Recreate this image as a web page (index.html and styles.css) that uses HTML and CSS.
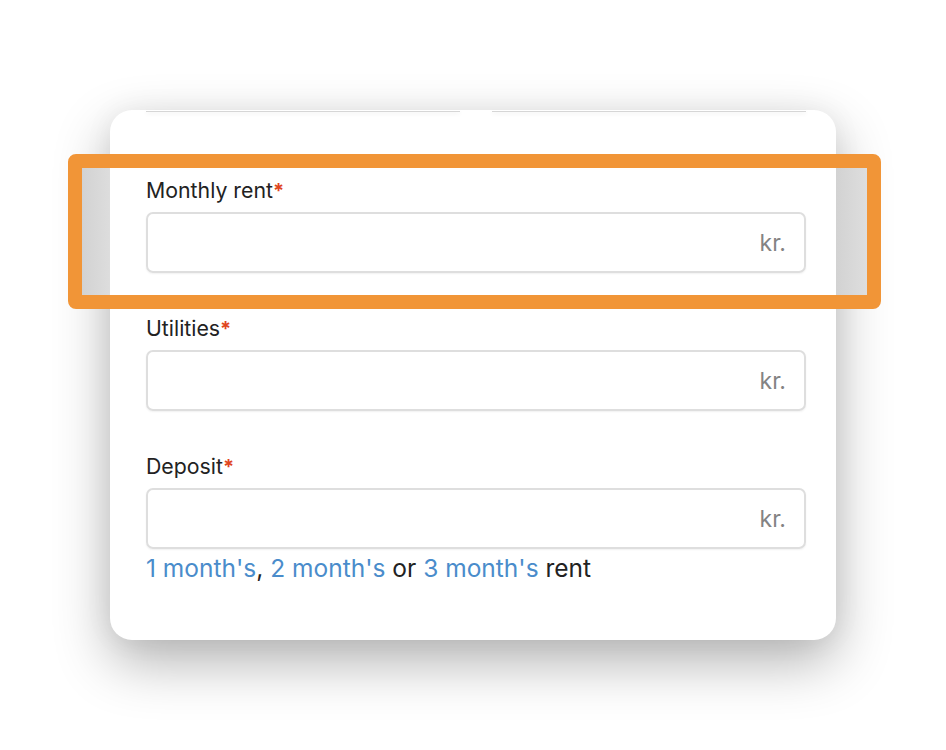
FILE: index.html
```html
<!DOCTYPE html>
<html lang="en">
<head>
    <meta charset="UTF-8">
    <meta name="viewport" content="width=device-width, initial-scale=1.0">
    <title>Rent form</title>
    <link rel="stylesheet" href="styles.css">
</head>
<body>
    <div class="page">
        <div class="card">
            <!-- bottom edges of the row scrolled out above -->
            <div class="cut-row">
                <div class="cut-input"></div>
                <div class="cut-input"></div>
            </div>

            <div class="field">
                <label class="field-label">Monthly rent<span class="req">*</span></label>
                <div class="input"><span class="unit">kr.</span></div>
            </div>

            <div class="field">
                <label class="field-label">Utilities<span class="req">*</span></label>
                <div class="input"><span class="unit">kr.</span></div>
            </div>

            <div class="field">
                <label class="field-label">Deposit<span class="req">*</span></label>
                <div class="input"><span class="unit">kr.</span></div>
                <p class="hint"><a href="#">1 month's</a>, <a href="#">2 month's</a> or <a href="#">3 month's</a> rent</p>
            </div>
        </div>

        <div class="highlight"></div>
    </div>
</body>
</html>
```

FILE: styles.css
```css
body {
    margin: 0;
    background: #fff;
    font-family: Inter, "Noto Sans", sans-serif;
    color: #222;
}

.page {
    position: relative;
    width: 946px;
    height: 750px;
    overflow: hidden;
    padding: 110px 0 0 110px;
    box-sizing: border-box;
}

.card {
    width: 726px;
    height: 530px;
    box-sizing: border-box;
    padding: 0 30px 0 36px;
    background: #fff;
    border-radius: 22px;
    box-shadow: 0 22px 55px rgba(0, 0, 0, 0.3), 0 0 30px rgba(0, 0, 0, 0.05);
    display: flex;
    flex-direction: column;
}

.cut-row {
    display: flex;
    gap: 32px;
    height: 2px;
}

.cut-input {
    flex: 1;
    border-bottom: 1px solid #d6d6d6;
    box-shadow: 0 2px 4px rgba(0, 0, 0, 0.06);
}

.field {
    margin-top: 65px;
    display: flex;
    flex-direction: column;
}

.field + .field {
    margin-top: 42px;
}

.field-label {
    font-size: 21.3px;
    line-height: 26px;
    margin-bottom: 8px;
    color: #222;
}

.req {
    color: #e0461f;
    font-weight: 700;
    font-size: 20px;
}

.input {
    height: 61px;
    box-sizing: border-box;
    border: 2px solid #dedede;
    border-radius: 7px;
    box-shadow: 0 1px 2px rgba(0, 0, 0, 0.06);
    display: flex;
    align-items: center;
    justify-content: flex-end;
    padding: 1px 18px 0 0;
}

.unit {
    font-size: 23px;
    color: #838383;
}

.hint {
    margin: 5px 0 0;
    font-size: 24.5px;
    line-height: 28px;
    color: #222;
}

.hint a {
    color: #4a8ccb;
    text-decoration: none;
}

.highlight {
    position: absolute;
    left: 68px;
    top: 154px;
    width: 813px;
    height: 155px;
    box-sizing: border-box;
    border: 14px solid #f19537;
    border-radius: 8px;
    background: linear-gradient(to right,
        #d2d2d2 0, #dddddd 28px, transparent 28px,
        transparent 754px, #d2d2d2 754px, #dedede 785px);
}
```
